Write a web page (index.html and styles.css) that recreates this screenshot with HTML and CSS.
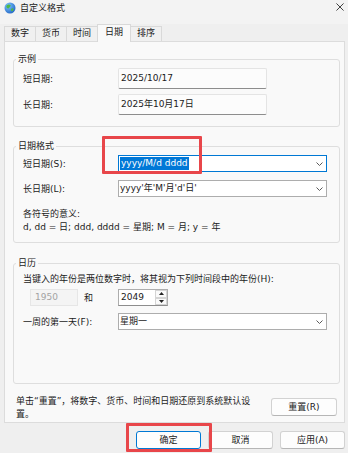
FILE: index.html
```html
<!DOCTYPE html>
<html lang="zh-CN">
  <head>
    <meta charset="UTF-8" />
    <meta name="viewport" content="width=device-width, initial-scale=1.0" />
    <title>自定义格式</title>
    <link rel="stylesheet" href="styles.css">
  </head>
  <body>
    <div class="window">
      <div class="titlebar">
        <svg class="app-icon" viewBox="0 0 12 12">
          <defs>
            <radialGradient id="globe" cx="0.35" cy="0.3" r="0.8">
              <stop offset="0" stop-color="#7cc4ff" />
              <stop offset="1" stop-color="#1f63c2" />
            </radialGradient>
          </defs>
          <circle cx="6" cy="6" r="5.5" fill="url(#globe)" />
          <path d="M2.6 3.4C3.8 2.2 5.9 2.3 6.6 3.3C7.1 4.2 5.8 4.8 5.3 5.8C4.8 6.9 3.3 6.6 2.7 5.6C2.3 4.9 2.2 4 2.6 3.4Z" fill="#4fb846" />
          <path d="M7.6 6.4C8.6 5.9 9.8 6.4 9.3 7.9C8.9 9 7.8 9.6 7.2 8.7C6.8 8 6.9 6.8 7.6 6.4Z" fill="#4fb846" />
        </svg>
        <span class="title">自定义格式</span>
        <svg class="close" viewBox="0 0 9 9">
          <path d="M0.5 0.5L8.5 8.5M8.5 0.5L0.5 8.5" stroke="#2b2b2b" stroke-width="1" />
        </svg>
      </div>

      <div class="tabs">
        <div class="tab">数字</div>
        <div class="tab">货币</div>
        <div class="tab">时间</div>
        <div class="tab tab-active">日期</div>
        <div class="tab">排序</div>
      </div>

      <div class="panel">
        <fieldset class="group group-sample">
          <legend>示例</legend>
          <div class="row">
            <span class="label">短日期:</span>
            <div class="field">2025/10/17</div>
          </div>
          <div class="row">
            <span class="label">长日期:</span>
            <div class="field">2025年10月17日</div>
          </div>
        </fieldset>

        <fieldset class="group group-format">
          <legend>日期格式</legend>
          <div class="row">
            <span class="label">短日期(S):</span>
            <div class="combo combo-focus">
              <span class="combo-text"><span class="selected">yyyy/M/d dddd</span></span>
              <svg class="chevron" viewBox="0 0 7 4"><path d="M0.5 0.5L3.5 3.5L6.5 0.5" fill="none" stroke="#5a5a5a" /></svg>
            </div>
          </div>
          <div class="row">
            <span class="label">长日期(L):</span>
            <div class="combo">
              <span class="combo-text">yyyy'年'M'月'd'日'</span>
              <svg class="chevron" viewBox="0 0 7 4"><path d="M0.5 0.5L3.5 3.5L6.5 0.5" fill="none" stroke="#5a5a5a" /></svg>
            </div>
          </div>
          <div class="note">
            <div>各符号的意义:</div>
            <div>d, dd = 日; ddd, dddd = 星期; M = 月; y = 年</div>
          </div>
        </fieldset>

        <fieldset class="group group-calendar">
          <legend>日历</legend>
          <div class="hint">当键入的年份是两位数字时，将其视为下列时间段中的年份(H):</div>
          <div class="row row-years">
            <div class="year-from">1950</div>
            <span class="and">和</span>
            <div class="spin">
              <span class="spin-value">2049</span>
              <div class="spin-arrows">
                <span class="spin-btn"><svg viewBox="0 0 5 3"><path d="M2.5 0L5 3H0Z" fill="#222" /></svg></span>
                <span class="spin-btn"><svg viewBox="0 0 5 3"><path d="M0 0H5L2.5 3Z" fill="#222" /></svg></span>
              </div>
            </div>
          </div>
          <div class="row row-week">
            <span class="label">一周的第一天(F):</span>
            <div class="combo">
              <span class="combo-text">星期一</span>
              <svg class="chevron" viewBox="0 0 7 4"><path d="M0.5 0.5L3.5 3.5L6.5 0.5" fill="none" stroke="#5a5a5a" /></svg>
            </div>
          </div>
        </fieldset>

        <div class="reset-row">
          <p class="reset-note">单击“重置”，将数字、货币、时间和日期还原到系统默认设<br>置。</p>
          <button class="btn btn-reset" type="button">重置(R)</button>
        </div>
      </div>

      <div class="actions">
        <button class="btn btn-default" type="button">确定</button>
        <button class="btn" type="button">取消</button>
        <button class="btn" type="button">应用(A)</button>
      </div>

      <!-- red annotation boxes drawn over the dialog -->
      <div class="mark mark-format"></div>
      <div class="mark mark-ok"></div>
    </div>
  </body>
</html>
```

FILE: styles.css
```css
/* Window frame */
* {
  box-sizing: border-box;
}

body {
  margin: 0;
  width: 348px;
  height: 453px;
  overflow: hidden;
  background-color: #efefef;
  font-family: "DejaVu Sans", "Noto Sans CJK SC", sans-serif;
  font-size: 9px;
  line-height: 12px;
  color: #1b1b1b;
}

.window {
  position: relative;
  height: 453px;
}

.titlebar {
  display: flex;
  align-items: flex-start;
  height: 24px;
  background-color: #f3f3f3;
}

.app-icon {
  width: 12px;
  height: 12px;
  margin: 2px 0 0 4px;
}

.title {
  margin-left: 4px;
  padding-top: 2px;
}

.close {
  width: 8px;
  height: 8px;
  margin: 3px 4px 0 auto;
}

/* Tabs */
.tabs {
  display: flex;
  align-items: flex-end;
  height: 17px;
  padding-left: 4px;
}

.tab {
  height: 15px;
  padding: 0 6px;
  line-height: 13px;
  border: 1px solid #d9d9d9;
  border-bottom: none;
  background-color: #f0f0f0;
}

.tab + .tab {
  margin-left: -1px;
}

.tab-active {
  position: relative;
  z-index: 1;
  height: 18px;
  margin-bottom: -1px;
  padding: 0 7px;
  line-height: 15px;
  background-color: #f9f9f9;
}

.panel {
  height: 382px;
  margin: 0 3px 0 4px;
  padding: 11px 4px 0 8px;
  border: 1px solid #dcdcdc;
  background-color: #f9f9f9;
}

/* Group boxes */
.group {
  margin: 0;
  min-width: 0;
  padding: 3px 9px 11px;
  border: 1px solid #dedede;
  border-radius: 3px;
}

.group legend {
  padding: 0 2px;
  margin-left: -7px;
}

.group-format {
  margin-top: 13px;
  padding-bottom: 8px;
}

.group-calendar {
  margin-top: 14px;
  padding-top: 4px;
  padding-bottom: 53px;
}

.row {
  display: flex;
  align-items: center;
}

.label {
  flex: none;
  width: 95px;
}

.group-sample .row + .row {
  margin-top: 5px;
}

.group-format .row + .row {
  margin-top: 8px;
}

.field {
  width: 149px;
  height: 21px;
  padding-left: 2px;
  line-height: 19px;
  border: 1px solid #e4e4e4;
  border-bottom-color: #8d8d8d;
  border-radius: 2px;
  background-color: #fcfcfc;
}

.combo {
  display: flex;
  align-items: center;
  width: 209px;
  height: 17px;
  padding-left: 1px;
  border: 1px solid #adadad;
  background-color: #ffffff;
}

.combo-focus {
  border-color: #0078d4;
}

.combo-text {
  flex: 1;
  line-height: 15px;
  white-space: nowrap;
}

.selected {
  display: inline-block;
  padding: 0 1px;
  line-height: 13px;
  background-color: #0078d7;
  color: #ffffff;
}

.chevron {
  width: 7px;
  height: 4px;
  margin-right: 3px;
}

.note {
  margin-top: 11px;
  line-height: 13px;
}

/* Calendar */
.row-years {
  margin-top: 4px;
}

.year-from {
  width: 48px;
  height: 17px;
  margin-left: 7px;
  padding-left: 4px;
  line-height: 15px;
  color: #a3a3a3;
  border: 1px solid #e6e6e6;
  background-color: #f4f4f4;
}

.and {
  width: 34px;
  margin-left: 6px;
}

.spin {
  display: flex;
  width: 50px;
  height: 17px;
  border: 1px solid #adadad;
  border-bottom-color: #8d8d8d;
  background-color: #ffffff;
}

.spin-value {
  flex: 1;
  padding-left: 2px;
  line-height: 15px;
}

.spin-arrows {
  display: flex;
  flex-direction: column;
  width: 12px;
}

.spin-btn {
  flex: 1;
  display: flex;
  justify-content: center;
  align-items: center;
  border: 1px solid #d4d4d4;
  background-color: #fafafa;
}

.spin-btn svg {
  width: 5px;
  height: 3px;
}

.row-week {
  margin-top: 7px;
}

/* Reset note and buttons */
.reset-row {
  display: flex;
  align-items: flex-start;
  margin-top: 11px;
}

.reset-note {
  margin: 0 0 0 3px;
  line-height: 13px;
  white-space: nowrap;
}

.btn {
  height: 18px;
  padding: 0;
  font: inherit;
  line-height: 16px;
  color: #1b1b1b;
  border: 1px solid #d2d2d2;
  border-bottom-color: #b6b6b6;
  border-radius: 3px;
  background-color: #fdfdfd;
}

.btn-reset {
  flex: none;
  width: 66px;
  margin: 3px 3px 0 auto;
}

.actions {
  display: flex;
  justify-content: flex-end;
  gap: 7px;
  padding: 8px 3px 0 0;
}

.actions .btn {
  width: 65px;
}

.btn-default {
  border-color: #0078d4;
}

/* Annotation marks */
.mark {
  position: absolute;
  border: 3px solid #e8464a;
  border-radius: 1px;
}

.mark-format {
  left: 102px;
  top: 136px;
  width: 100px;
  height: 38px;
}

.mark-ok {
  left: 126px;
  top: 423px;
  width: 86px;
  height: 29px;
}
```
